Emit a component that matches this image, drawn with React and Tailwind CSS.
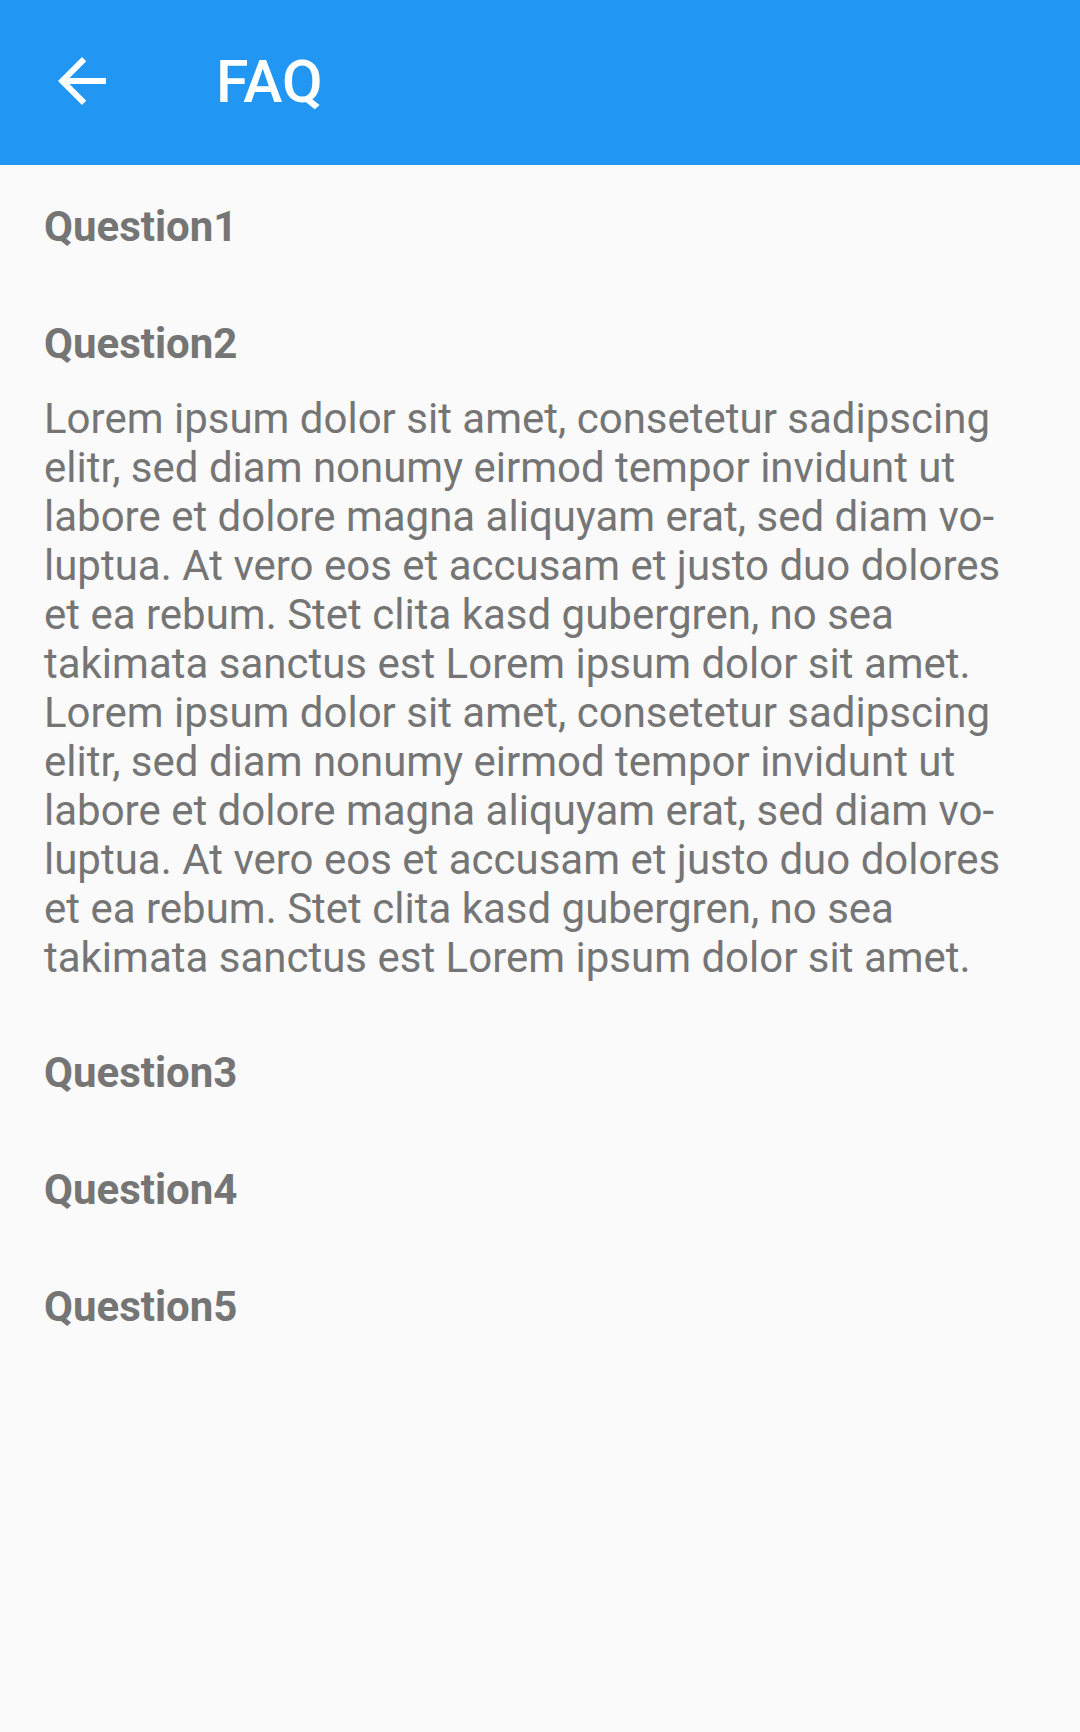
import { useState } from 'react';

const lines = [
  'Lorem ipsum dolor sit amet, consetetur sadipscing',
  'elitr, sed diam nonumy eirmod tempor invidunt ut',
  'labore et dolore magna aliquyam erat, sed diam vo-',
  'luptua. At vero eos et accusam et justo duo dolores',
  'et ea rebum. Stet clita kasd gubergren, no sea',
  'takimata sanctus est Lorem ipsum dolor sit amet.',
];

const questions = ['Question1', 'Question2', 'Question3', 'Question4', 'Question5'];

const App = () => {
  const [open, setOpen] = useState(1);

  return (
    <div className="min-h-[1732px] bg-[#fafafa] font-['Roboto',sans-serif]">
      {/* Toolbar */}
      <div className="h-[165px] bg-[#2196f3] flex items-center">
        <button className="w-[168px] h-[165px] flex items-center justify-start pl-[46px] pb-[4px]">
          <svg width="72" height="72" viewBox="0 0 24 24" fill="#ffffff">
            <path d="M20 11H7.83l5.59-5.59L12 4l-8 8 8 8 1.41-1.41L7.83 13H20v-2z" />
          </svg>
        </button>
        <h1 className="ml-[48px] text-[59px] leading-none font-medium text-white pb-[2px]">FAQ</h1>
      </div>

      {/* Questions */}
      <div className="px-[44px] text-[#757575]">
        {questions.map((q, i) => (
          <div key={q}>
            <div
              onClick={() => setOpen(open === i ? -1 : i)}
              className={`pt-[35px] ${open === i ? 'pb-0' : 'pb-[29px]'} text-[42px] leading-[53px] font-bold cursor-pointer`}
            >
              {q}
            </div>
            {open === i && (
              <div className="pt-[24px] pb-[29px] text-[42px] leading-[49px] whitespace-nowrap">
                {[...lines, ...lines].map((l, j) => (
                  <div key={j}>{l}</div>
                ))}
              </div>
            )}
          </div>
        ))}
      </div>
    </div>
  );
};

export default App;
